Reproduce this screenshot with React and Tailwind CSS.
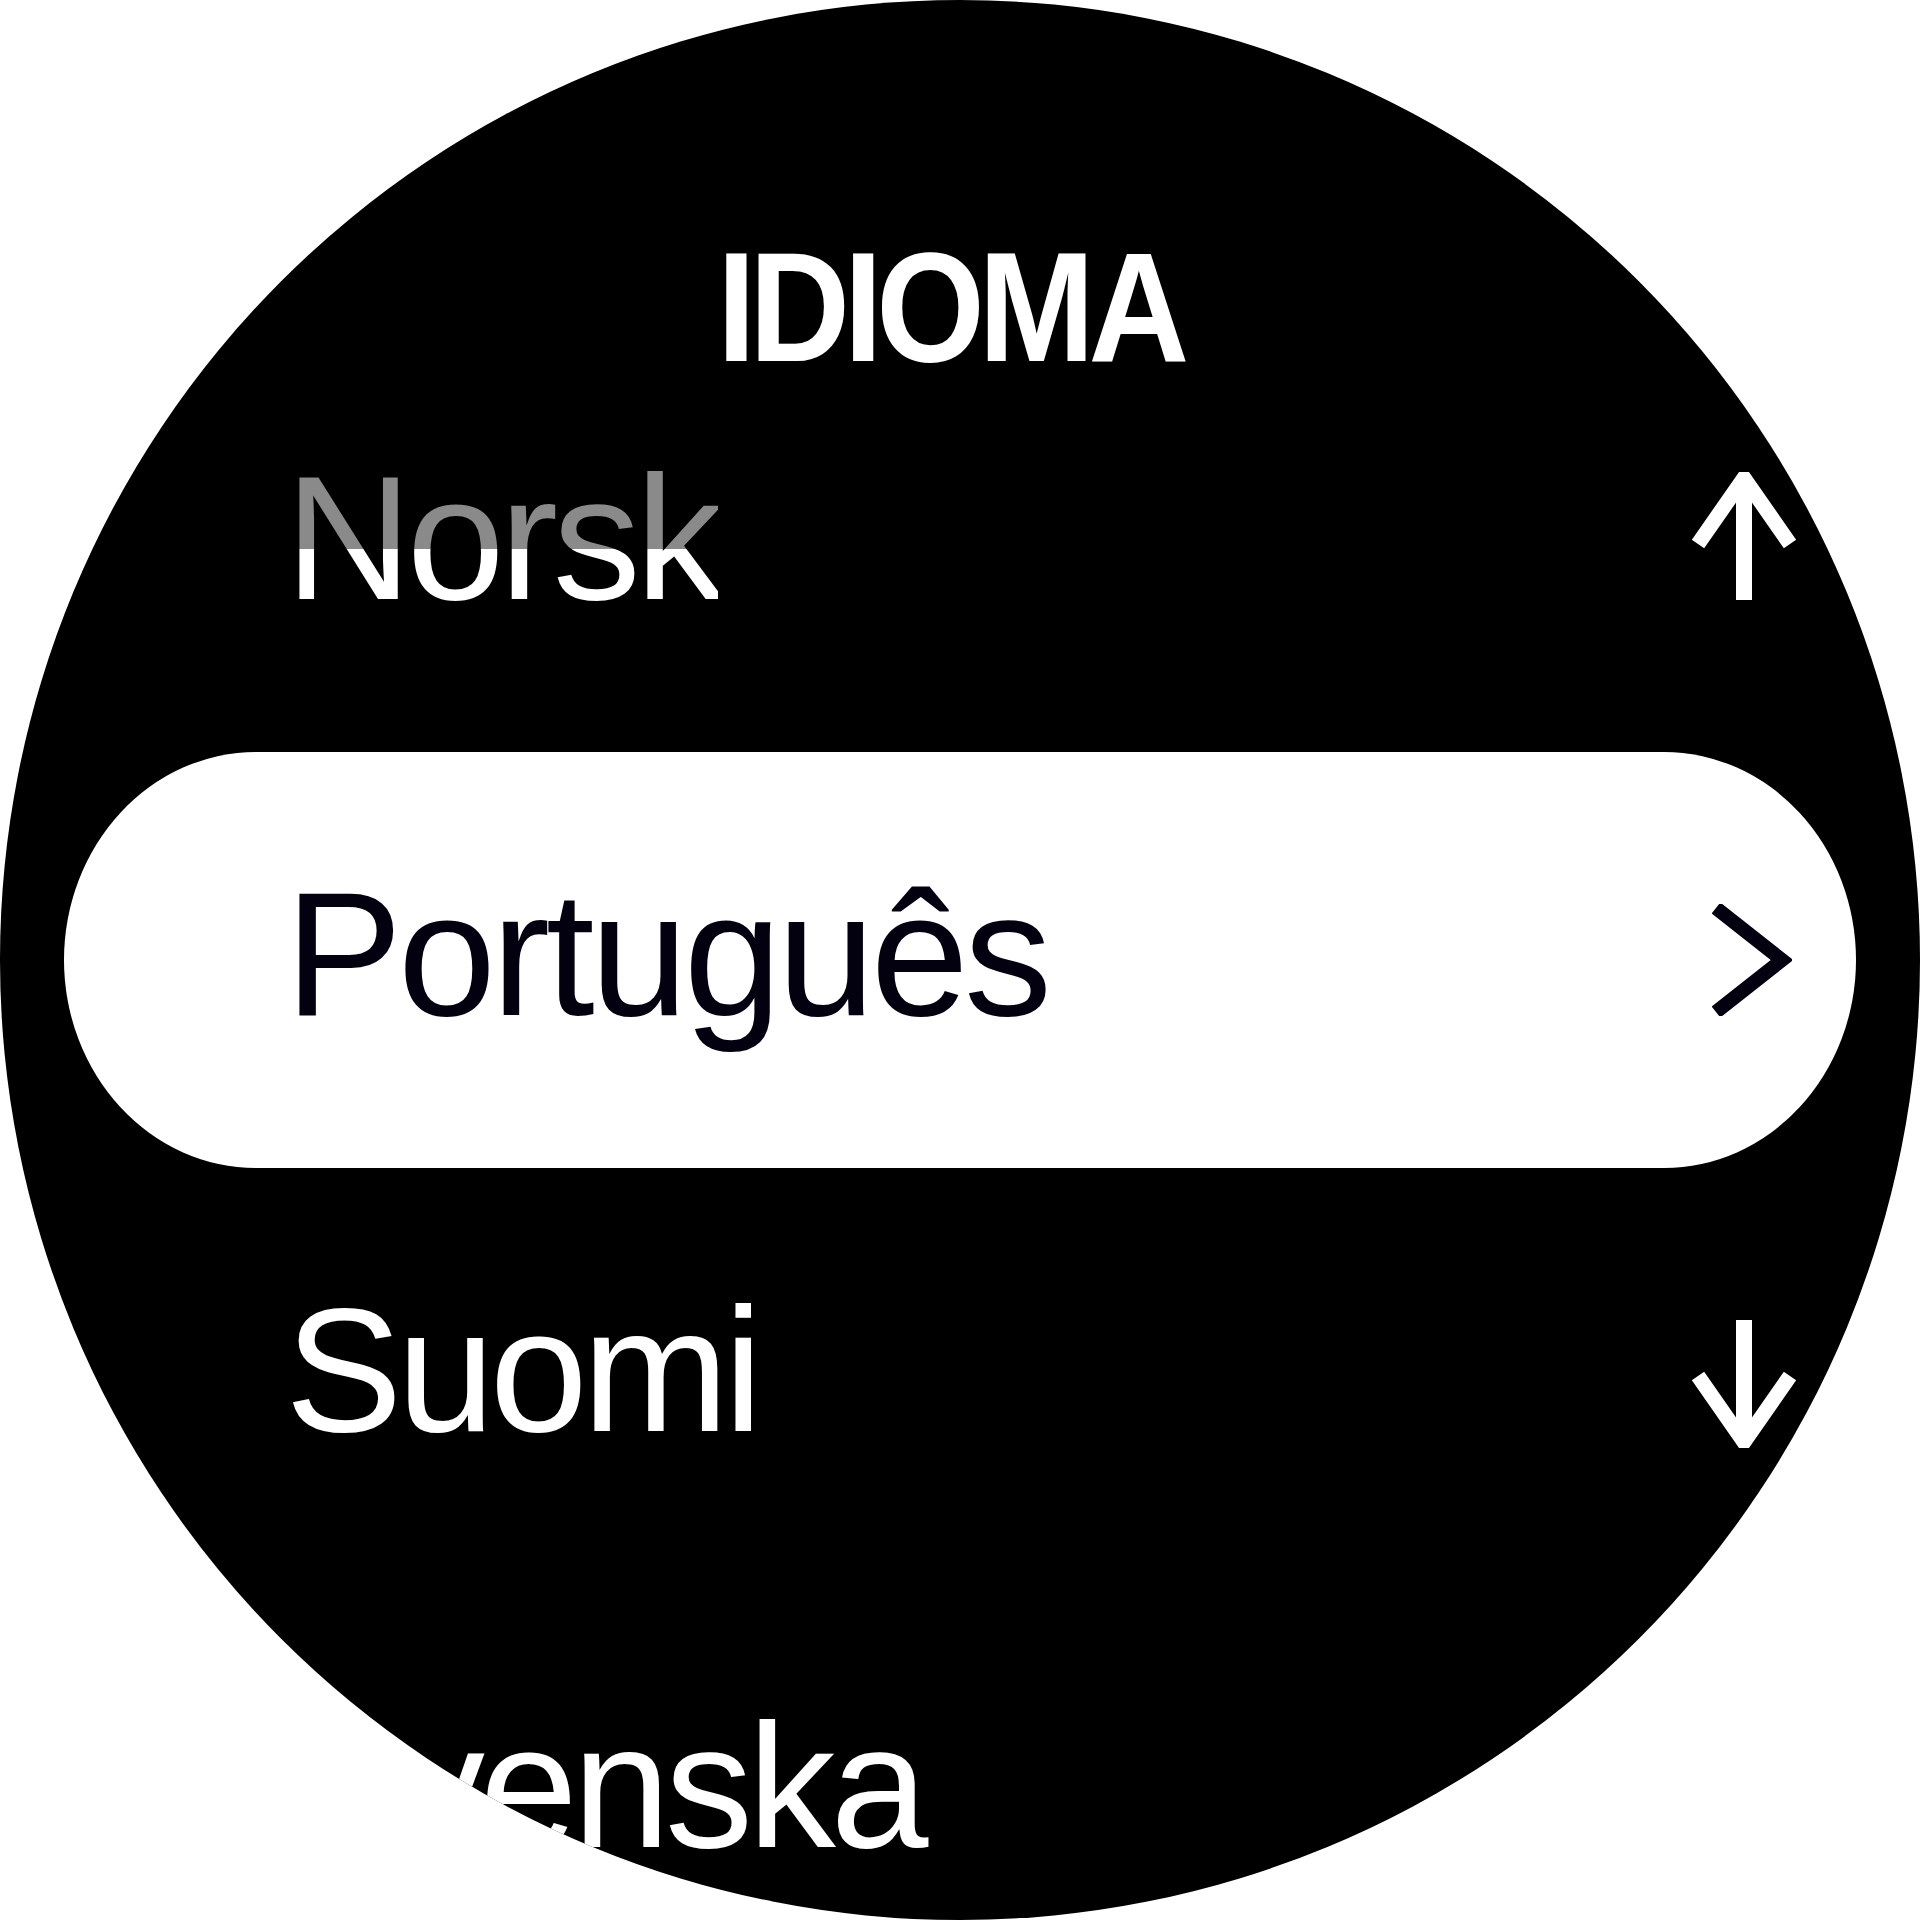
import React from "react";

const FONT = { fontFamily: '"Liberation Sans", Arial, sans-serif' };

function ArrowUp() {
  return (
    <svg width="112" height="128" viewBox="0 0 112 128" fill="none" stroke="#fff">
      <line x1="56" y1="6" x2="56" y2="128" strokeWidth="16" />
      <polyline points="10,72 56,6 102,72" strokeWidth="15" strokeLinejoin="miter" />
    </svg>
  );
}

function ArrowDown() {
  return (
    <svg width="112" height="128" viewBox="0 0 112 128" fill="none" stroke="#fff">
      <line x1="56" y1="0" x2="56" y2="122" strokeWidth="16" />
      <polyline points="10,56 56,122 102,56" strokeWidth="15" strokeLinejoin="miter" />
    </svg>
  );
}

function Chevron() {
  return (
    <svg width="80" height="112" viewBox="0 0 80 112" fill="none" stroke="#03000f">
      <polyline points="4,4 70,56 4,108" strokeWidth="14" strokeLinejoin="miter" />
    </svg>
  );
}

export default function App() {
  return (
    <div className="w-[1920px] h-[1920px] bg-white" style={FONT}>
      <div className="w-full h-full rounded-full bg-black overflow-hidden flex flex-col">
        {/* title */}
        <div className="h-[336px] pt-[230px] pr-[20px] flex justify-center text-white text-[155px] font-bold leading-none tracking-[-0.045em]">
          <span className="inline-block scale-x-[0.9]">IDIOMA</span>
        </div>

        {/* Norsk, fading out at the top */}
        <div className="shrink-0 mx-[64px] h-[416px] flex items-center justify-between pl-[221px] pr-[56px]">
          <span className="text-[176px] leading-none tracking-[-0.03em] text-transparent bg-clip-text bg-[linear-gradient(to_bottom,#8a8a8a_0%,#8a8a8a_56%,#ffffff_56%,#ffffff_100%)] mb-[12px]">
            Norsk
          </span>
          <div className="w-[112px] mb-[16px]">
            <ArrowUp />
          </div>
        </div>

        {/* selected row */}
        <div className="shrink-0 mx-[64px] h-[416px] flex items-center justify-between bg-white rounded-[192px/208px] pl-[221px] pr-[64px]">
          <span className="text-[176px] leading-none tracking-[-0.025em] text-[#03000f] mb-[12px]">
            Português
          </span>
          <div className="w-[80px]">
            <Chevron />
          </div>
        </div>

        <div className="shrink-0 mx-[64px] h-[416px] flex items-center justify-between pl-[221px] pr-[56px]">
          <span className="text-[176px] leading-none tracking-[-0.03em] text-white mb-[12px]">
            Suomi
          </span>
          <div className="w-[112px] mt-[16px]">
            <ArrowDown />
          </div>
        </div>

        <div className="shrink-0 mx-[64px] h-[416px] flex items-center pl-[221px]">
          <span className="text-[176px] leading-none tracking-[-0.03em] text-white mb-[12px]">
            Svenska
          </span>
        </div>
      </div>
    </div>
  );
}
